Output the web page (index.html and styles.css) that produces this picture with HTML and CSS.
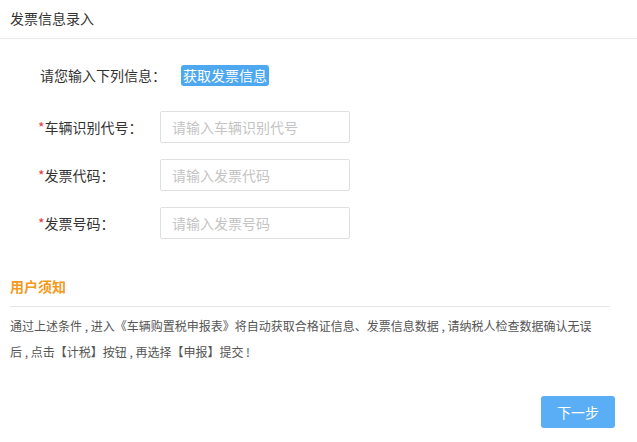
FILE: index.html
```html
<!DOCTYPE html>
<html lang="zh-CN">
<head>
<meta charset="utf-8">
<title>发票信息录入</title>
<link rel="stylesheet" href="styles.css">
</head>
<body>
<div class="page">
  <div class="header">发票信息录入</div>
  <div class="intro">
    <span class="intro-label">请您输入下列信息<span class="colon">：</span></span>
    <button class="fetch-btn">获取发票信息</button>
  </div>
  <div class="form">
    <div class="row">
      <label class="label"><span class="req">*</span>车辆识别代号<span class="colon">：</span></label>
      <input class="input" placeholder="请输入车辆识别代号">
    </div>
    <div class="row">
      <label class="label"><span class="req">*</span>发票代码<span class="colon">：</span></label>
      <input class="input" placeholder="请输入发票代码">
    </div>
    <div class="row">
      <label class="label"><span class="req">*</span>发票号码<span class="colon">：</span></label>
      <input class="input" placeholder="请输入发票号码">
    </div>
  </div>
  <div class="notice">
    <div class="notice-title">用户须知</div>
    <p class="notice-text">通过上述条件 , 进入《车辆购置税申报表》将自动获取合格证信息、发票信息数据 , 请纳税人检查数据确认无误后 , 点击【计税】按钮 , 再选择【申报】提交 !</p>
  </div>
  <div class="actions">
    <button class="next-btn">下一步</button>
  </div>
</div>
</body>
</html>
```
FILE: styles.css
```css
* { box-sizing: border-box; }
html, body { margin: 0; padding: 0; background: #fff; }
body {
  font-family: "Microsoft YaHei", "Noto Sans CJK SC", sans-serif;
  color: #333;
  font-size: 14px;
}
.page { width: 637px; height: 442px; }
.header {
  height: 39px;
  line-height: 37px;
  padding-left: 10px;
  border-bottom: 1px solid #ececec;
  font-size: 14px;
  color: #333;
}
.colon { font-family: "Noto Sans CJK TC", "Noto Sans CJK SC", sans-serif; }
.intro {
  display: flex;
  align-items: center;
  padding-left: 40px;
  margin-top: 25px;
  height: 22px;
}
.intro-label { font-size: 14px; color: #333; }
.fetch-btn {
  margin-left: 15px;
  height: 21px;
  padding: 0 2px;
  border: none;
  border-radius: 3px;
  background: #4ea8f0;
  color: #fff;
  font-family: inherit;
  font-size: 14px;
  line-height: 21px;
}
.form {
  display: flex;
  flex-direction: column;
  gap: 16px;
  margin-top: 25px;
}
.row {
  display: flex;
  align-items: center;
  height: 32px;
}
.label {
  width: 122px;
  margin-left: 38px;
  font-size: 14px;
  color: #333;
}
.req { color: #e8373b; }
.input {
  width: 190px;
  height: 32px;
  border: 1px solid #e0e0e0;
  border-radius: 2px;
  padding: 0 11px;
  font-family: inherit;
  font-size: 14px;
  color: #333;
  outline: none;
}
.input::placeholder { color: #c4c4c4; }
.notice {
  margin: 37px 27px 0 10px;
}
.notice-title {
  font-size: 14px;
  font-weight: bold;
  color: #f39a1b;
  line-height: 20px;
  padding-bottom: 10px;
  border-bottom: 1px solid #e6e6e6;
}
.notice-text {
  width: 590px;
  margin: 6px 0 0;
  font-size: 12px;
  line-height: 26px;
  color: #555;
}
.actions {
  display: flex;
  justify-content: flex-end;
  padding-right: 22px;
  margin-top: 31px;
}
.next-btn {
  width: 74px;
  height: 32px;
  border: none;
  border-radius: 3px;
  background: #5aaef5;
  color: #fff;
  font-family: inherit;
  font-size: 14px;
}
```
